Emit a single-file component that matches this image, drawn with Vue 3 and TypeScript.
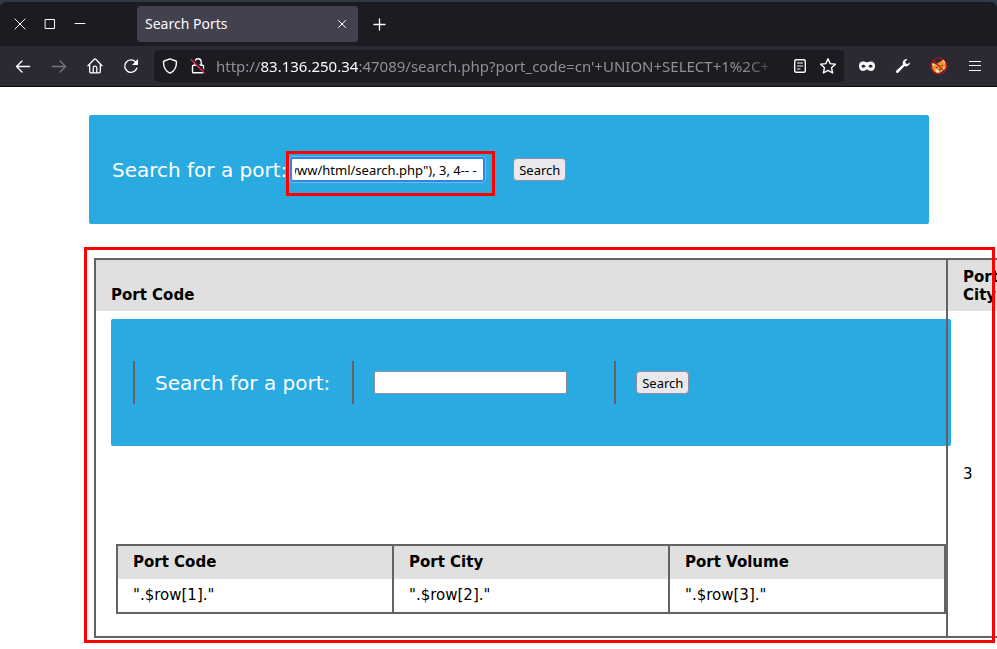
<script setup lang="ts">
import { onMounted, ref } from 'vue'

interface Port {
  code: string
  city: string
  volume: string
}

const query = ref<string>(`cn' UNION SELECT 1, LOAD_FILE("/var/www/html/search.php"), 3, 4-- - `)
const nestedQuery = ref<string>('')
const queryBox = ref<HTMLInputElement | null>(null)

const rows: Port[] = [{ code: '".$row[1]."', city: '".$row[2]."', volume: '".$row[3]."' }]

// Keep the end of a long query in view.
onMounted(() => {
  const box = queryBox.value
  if (box) box.scrollLeft = box.scrollWidth
})
</script>

<template>
  <div class="window">
    <header class="chrome">
      <div class="tabstrip">
        <button class="win" type="button" aria-label="Close window">
          <svg width="12" height="12" viewBox="0 0 12 12"><path d="M1 1l10 10M11 1L1 11" /></svg>
        </button>
        <button class="win" type="button" aria-label="Maximize window">
          <svg width="12" height="12" viewBox="0 0 12 12"><path d="M1.500 1.500h9v9h-9z" /></svg>
        </button>
        <button class="win" type="button" aria-label="Minimize window">
          <svg width="12" height="12" viewBox="0 0 12 12"><path d="M1 5.500h10" /></svg>
        </button>
        <div class="tab">
          <span class="tab-title">Search Ports</span>
          <button class="tab-close" type="button" aria-label="Close tab">
            <svg width="10" height="10" viewBox="0 0 10 10"><path d="M1.500 1.500l7 7M8.500 1.500l-7 7" /></svg>
          </button>
        </div>
        <button class="new-tab" type="button" aria-label="New tab">
          <svg width="14" height="14" viewBox="0 0 14 14"><path d="M7.500 2v11M2 7.500h11" stroke-width="1.300" /></svg>
        </button>
      </div>

      <nav class="toolbar">
        <button class="tool" type="button" aria-label="Back">
          <svg width="16" height="16" viewBox="0 0 16 16"><path d="M14.500 8.500H1.500M7 3L1.500 8.500 7 14" stroke-width="1.400" /></svg>
        </button>
        <button class="tool dim" type="button" aria-label="Forward" disabled>
          <svg width="16" height="16" viewBox="0 0 16 16"><path d="M1.500 8.500h13M9 3l5.500 5.500L9 14" stroke-width="1.400" /></svg>
        </button>
        <button class="tool" type="button" aria-label="Home">
          <svg width="16" height="16" viewBox="0 0 16 16">
            <path d="M1 7.800L7.300 1.300a1 1 0 0 1 1.400 0L15 7.800M2.700 6.500v7.300a1 1 0 0 0 1 1h8.600a1 1 0 0 0 1-1V6.500M6.200 14.800V10a1.800 1.800 0 0 1 3.600 0v4.800" stroke-width="1.300" />
          </svg>
        </button>
        <button class="tool" type="button" aria-label="Reload">
          <svg width="16" height="16" viewBox="0 0 16 16">
            <path d="M13.800 10.200A6.200 6.200 0 1 1 12.600 4" stroke-width="1.400" />
            <path class="solid" d="M15 1v5.500a.5.5 0 0 1-.5.5H9z" />
          </svg>
        </button>

        <div class="urlbar">
          <button class="site" type="button" aria-label="Tracking protection">
            <svg width="16" height="16" viewBox="0 0 16 16">
              <path d="M8 .8L13.800 3a1 1 0 0 1 .7 1C14.500 9 12.500 13.200 8 15.200 3.500 13.200 1.500 9 1.500 4a1 1 0 0 1 .7-1z" stroke-width="1.400" />
            </svg>
          </button>
          <button class="site" type="button" aria-label="Connection not secure">
            <svg width="16" height="16" viewBox="0 0 16 16">
              <path d="M4.800 7V4a3.200 3.200 0 0 1 6.400 0v3M3.500 7.300h9a1 1 0 0 1 1 1v5.400a1 1 0 0 1-1 1h-9a1 1 0 0 1-1-1V8.300a1 1 0 0 1 1-1z" stroke-width="1.400" />
              <path class="slash-back" d="M2.500 1.500l13 13" />
              <path class="slash" d="M1.200 1.800l13 13" />
            </svg>
          </button>
          <div class="url"><span>http://</span><span class="host">83.136.250.34</span><span>:47089/search.php?port_code=cn'+UNION+SELECT+1%2C+</span></div>
          <button class="site" type="button" aria-label="Reader view">
            <svg width="16" height="16" viewBox="0 0 16 16">
              <rect x="2.700" y="1.700" width="10.600" height="12.600" rx="1.500" stroke-width="1.400" />
              <path d="M5.500 5h5M5.500 8h5M5.500 11h2.500" stroke-width="1.200" />
            </svg>
          </button>
          <button class="site" type="button" aria-label="Bookmark">
            <svg width="16" height="16" viewBox="0 0 16 16">
              <path d="M8 .8l2.200 4.800 5.200.6-3.900 3.500 1.100 5.300L8 12.400 3.400 15l1.100-5.300L.6 6.200l5.200-.6z" stroke-width="1.400" />
            </svg>
          </button>
        </div>

        <button class="tool" type="button" aria-label="Mask">
          <svg width="18" height="16" viewBox="0 0 18 16">
            <path class="solid" fill-rule="evenodd" d="M5 3.500c2 0 3 .8 4 .8s2-.8 4-.8c2.600 0 4 1.500 4 4.500s-1.700 5-4 5c-1.800 0-2.800-1.600-4-1.600S6.800 13 5 13c-2.300 0-4-2-4-5s1.400-4.500 4-4.500zM3.400 8.200c.2 1.700 3.300 2 4.200.3C6.900 6.100 3.800 6.200 3.400 8.200zm7 .3c.9 1.700 4 1.400 4.200-.3-.4-2-3.500-2.100-4.200.3z" />
          </svg>
        </button>
        <button class="tool" type="button" aria-label="Developer tools">
          <svg width="16" height="16" viewBox="0 0 16 16">
            <path class="solid" d="M11.500 1a4 4 0 0 0-3.600 5.400L1.400 12.600a1.400 1.400 0 0 0 2 2L9.600 8.100A4 4 0 0 0 15 4.300l-2.300 1.800-2-.5-.5-2L12.500 1.200z" />
          </svg>
        </button>
        <button class="tool" type="button" aria-label="Proxy disabled">
          <svg width="18" height="18" viewBox="0 0 18 18">
            <path class="fox" d="M2.200 6.500L6 7l4-2.200 3.500-2.600 1.500 3 1.200 4.300-3 4.300-4.700 2.600-4-1.500-2.300-3.400z" />
            <path class="fur" d="M2 6.200l3 .6-1.600 2.600zM12.800 2l2.200 1.800.4 3.200-2-1.600zM5 12l3 .8 1.500 2.400-3 .2zM12 11.500l3.500-1.500-1.700 3.500-2.600 1z" />
            <path class="eyes" d="M6.500 10.500h.5M11.800 8.500h.5M9.500 12.700h1" />
            <path class="ban" d="M17 9A8 8 0 1 1 1 9a8 8 0 0 1 16 0zM3.500 3.500l11 11" />
          </svg>
        </button>
        <button class="tool" type="button" aria-label="Menu">
          <svg width="12" height="12" viewBox="0 0 12 12"><path d="M0 1.500h12M0 5.500h12M0 10.500h12" stroke-width="1.200" /></svg>
        </button>
      </nav>
    </header>

    <main class="page">
      <form class="banner" @submit.prevent>
        <label for="port">Search for a port:</label>
        <span class="marked">
          <input id="port" ref="queryBox" v-model="query" class="field focused" type="text" />
          <span class="mark field-mark"></span>
        </span>
        <button class="submit" type="submit">Search</button>
      </form>

      <section class="results">
        <table class="ports">
          <thead>
            <tr>
              <th class="first">Port Code</th>
              <th class="side">Port City</th>
            </tr>
          </thead>
          <tbody>
            <tr>
              <td class="loaded">
                <form class="banner nested" @submit.prevent>
                  <div class="cell"><label for="nested-port">Search for a port:</label></div>
                  <div class="cell grow"><input id="nested-port" v-model="nestedQuery" class="field" type="text" /></div>
                  <div class="cell"><button class="submit" type="submit">Search</button></div>
                </form>
                <table class="ports inner">
                  <thead>
                    <tr>
                      <th>Port Code</th>
                      <th>Port City</th>
                      <th>Port Volume</th>
                    </tr>
                  </thead>
                  <tbody>
                    <tr v-for="row in rows" :key="row.code">
                      <td>{{ row.code }}</td>
                      <td>{{ row.city }}</td>
                      <td>{{ row.volume }}</td>
                    </tr>
                  </tbody>
                </table>
              </td>
              <td>3</td>
            </tr>
          </tbody>
        </table>
        <span class="mark results-mark"></span>
      </section>
    </main>
  </div>
</template>

<style>
body {
  margin: 0;
  background: #fff;
}
</style>

<style scoped>
* {
  box-sizing: border-box;
}
.window {
  min-height: 100vh;
  overflow: hidden;
  background: #fff;
  font-family: "DejaVu Sans", sans-serif;
}
.chrome {
  background: #2d3b44;
  border-bottom: 1px solid #0c0c0d;
  padding-top: 2px;
  color: #fbfbfe;
  font: 15px/20px "Noto Sans", sans-serif;
}
.chrome button {
  display: flex;
  align-items: center;
  justify-content: center;
  flex: none;
  padding: 0;
  border: 0;
  background: none;
  color: inherit;
}
.chrome svg {
  display: block;
  fill: none;
  stroke: currentColor;
  stroke-width: 1;
  stroke-linecap: round;
  stroke-linejoin: round;
}
.chrome .solid {
  fill: currentColor;
  stroke: none;
}
.tabstrip {
  display: flex;
  align-items: center;
  height: 44px;
  padding-left: 5px;
  background: #1c1b22;
  border-radius: 6px 6px 0 0;
}
.win {
  width: 30px;
  height: 30px;
}
.tab {
  display: flex;
  align-items: center;
  justify-content: space-between;
  width: 221px;
  height: 36px;
  margin-left: 42px;
  padding: 0 6px 0 8px;
  border-radius: 4px;
  background: #42414d;
}
.tab-title {
  font-size: 14px;
}
.tab-close {
  width: 20px;
  height: 20px;
}
.new-tab {
  width: 36px;
  height: 36px;
  margin-left: 3px;
}
.toolbar {
  display: flex;
  align-items: center;
  height: 40px;
  padding: 0 4px 0 5px;
  background: #2b2a33;
}
.tool {
  width: 36px;
  height: 32px;
}
.toolbar .dim {
  color: #77767e;
}
.urlbar {
  display: flex;
  align-items: center;
  flex: 1;
  min-width: 0;
  height: 32px;
  margin: 0 5px;
  padding: 0 2px;
  border-radius: 4px;
  background: #1c1b22;
}
.site {
  width: 28px;
  height: 28px;
}
.slash-back {
  stroke: #1c1b22;
  stroke-width: 2;
}
.slash {
  stroke: #e22850;
  stroke-width: 1.500;
}
.url {
  flex: 1;
  min-width: 0;
  margin: 0 2px 0 4px;
  overflow: hidden;
  white-space: nowrap;
  color: #8f8f96;
  mask-image: linear-gradient(to left, transparent, #000 42px);
}
.host {
  color: #fbfbfe;
}
.chrome .fox {
  fill: #f0932b;
  stroke: none;
}
.chrome .fur {
  fill: #f7e3cf;
  stroke: none;
}
.eyes {
  stroke: #3a2415;
}
.ban {
  stroke: #c40d14;
  stroke-width: 1.200;
}
.page {
  position: relative;
  z-index: 0;
  padding: 28px 68px 6px 89px;
  font-size: 15px;
  line-height: 18px;
}
.banner {
  display: flex;
  align-items: center;
  height: 109px;
  padding: 0 23px;
  border-radius: 2px;
  background: #29abe2;
  color: #fff;
  font-size: 20px;
  line-height: 24px;
}
.marked {
  position: relative;
  display: flex;
  margin: 0 28px 0 3px;
}
.field {
  width: 193px;
  height: 23px;
  margin: 0;
  padding: 1px 3px;
  border: 1px solid #8f8f9d;
  border-radius: 2px;
  background: #fff;
  color: #000;
  font: 13px/18px "Noto Sans", sans-serif;
}
.focused {
  width: 195px;
  height: 25px;
  border: 2px solid #3584e4;
  border-radius: 3px;
  outline: 1px solid #6fb9f5;
}
.submit {
  width: 53px;
  height: 23px;
  padding: 0;
  border: 1px solid #8f8f9d;
  border-radius: 4px;
  background: #e9e9ed;
  color: #000;
  font: 13px/18px "Noto Sans", sans-serif;
}
.mark {
  position: absolute;
  z-index: 2;
  border: 3px solid #f00;
  pointer-events: none;
}
.field-mark {
  inset: -6px -10px -14px -4px;
}
.results {
  position: relative;
  margin: 23px -66px 0 -5px;
  padding: 11px 0 5px 10px;
}
.results-mark {
  inset: 0;
}
.ports {
  width: calc(100% + 32px);
  border-collapse: collapse;
  border: 2px solid #666163;
}
.ports th,
.ports td {
  padding: 8px 15px 7px;
  border-left: 2px solid #666163;
  text-align: left;
}
.ports thead {
  background: #e0e0e0;
}
.ports th {
  vertical-align: bottom;
}
.side {
  width: 79px;
}
.ports .loaded {
  padding-bottom: 22px;
}
.nested {
  position: relative;
  z-index: -1;
  height: 127px;
  margin-right: -20px;
  padding: 0 22px;
}
.cell {
  display: flex;
  align-items: center;
  height: 43px;
  padding: 0 22px 0 20px;
  border-left: 2px solid #666163;
}
.grow {
  padding-right: 47px;
}
.inner {
  width: calc(100% + 10px);
  margin: 98px -15px 0 5px;
  table-layout: fixed;
}
.inner th,
.inner td {
  padding: 7px 15px 8px;
}
</style>
